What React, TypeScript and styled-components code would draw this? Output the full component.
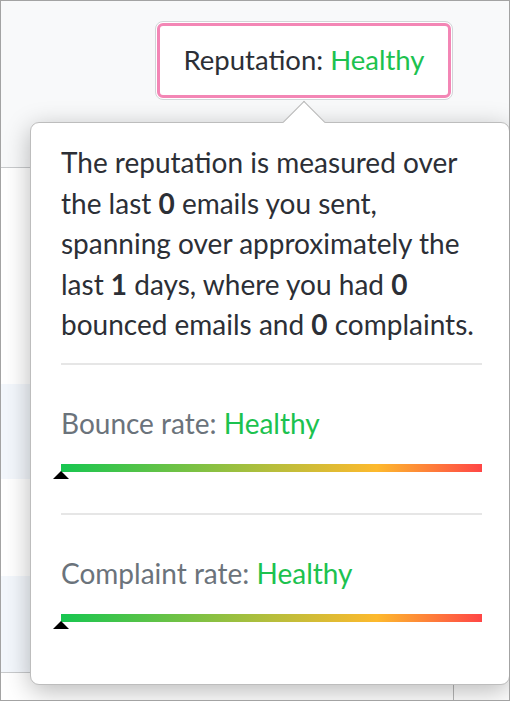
import styled, { createGlobalStyle } from 'styled-components';

const GlobalStyle = createGlobalStyle`
  html, body { margin: 0; padding: 0; background: #fff; }
  body { font-family: Lato, "Open Sans", Arial, sans-serif; }
  * { box-sizing: border-box; }
`;

const Frame = styled.div`
  position: relative;
  width: 510px;
  height: 701px;
  border: 1px solid #a3a3a3;
  overflow: hidden;
  display: flex;
  flex-direction: column;
  background: #fff;
`;

const Header = styled.div`
  height: 167px;
  flex: none;
  background: #f8f9fa;
  border-bottom: 1px solid #c8cacc;
  padding: 20px 0 0 154px;
`;

const Row = styled.div<{ $h: number; $striped?: boolean }>`
  flex: none;
  height: ${p => p.$h}px;
  background: ${p => (p.$striped ? '#f3f7fc' : '#fff')};
`;

const FooterRow = styled.div`
  flex: 1;
  border-top: 1px solid #c8cacc;
  display: grid;
  grid-template-columns: 452px 1fr;
`;

const FooterCell = styled.div`
  & + & { border-left: 1px solid #b8b8b8; }
`;

const Trigger = styled.button`
  width: 298px;
  height: 79px;
  border: 1px solid #d2d5d8;
  border-radius: 8px;
  background: #fff;
  padding: 1px;
  cursor: pointer;
`;

const TriggerInner = styled.div`
  height: 100%;
  border: 3px solid #f386b5;
  border-radius: 6px;
  display: flex;
  align-items: center;
  justify-content: center;
  font-family: Lato, "Open Sans", Arial, sans-serif;
  font-size: 27.5px;
  color: #2c2f36;
  padding-bottom: 2px;
`;

const Good = styled.span`
  color: #1cc24f;
`;

const Popover = styled.div`
  position: absolute;
  left: 29px;
  top: 121px;
  width: 480px;
  height: 563px;
  background: #fff;
  border: 1px solid #bdbdbd;
  border-radius: 9px;
  box-shadow: 0 6px 26px rgba(0, 0, 0, 0.28);
  padding: 19px 27px 0 30px;
`;

const Arrow = styled.div`
  position: absolute;
  top: -16px;
  left: 258px;
  width: 30px;
  height: 30px;
  background: #fff;
  border-top: 1px solid #b5b5b5;
  border-left: 1px solid #b5b5b5;
  transform: rotate(45deg);
`;

const Body = styled.p`
  margin: 0;
  font-size: 28px;
  line-height: 40.5px;
  color: #2c2f36;

  b { font-weight: 700; }
`;

const Divider = styled.hr<{ $top: number }>`
  margin: ${p => p.$top}px 0 0;
  border: none;
  height: 2px;
  background: #e6e6e6;
`;

const Metric = styled.div`
  padding-top: 38px;
`;

const MetricLabel = styled.div`
  font-size: 28px;
  line-height: 40px;
  color: #6b737b;
`;

const Track = styled.div`
  position: relative;
  margin-top: 21px;
  height: 8px;
  background: linear-gradient(to right, #17c650 0%, #b6be3c 50%, #fdb92d 75%, #ff4646 100%);
`;

const Marker = styled.div`
  position: absolute;
  top: 7px;
  width: 0;
  height: 0;
  margin-left: -8px;
  border-left: 8px solid transparent;
  border-right: 8px solid transparent;
  border-bottom: 8px solid #000;
`;

const RateMetric = ({ label, status, value }: { label: string; status: string; value: number }) => (
  <Metric>
    <MetricLabel>
      {label}: <Good>{status}</Good>
    </MetricLabel>
    <Track>
      <Marker style={{ left: `${value}%` }} />
    </Track>
  </Metric>
);

const App = () => {
  return (
    <>
      <GlobalStyle />
      <Frame>
        <Header>
          <Trigger type='button'>
            <TriggerInner>
              Reputation:&nbsp;<Good>Healthy</Good>
            </TriggerInner>
          </Trigger>
        </Header>
        <Row $h={216} />
        <Row $h={95} $striped />
        <Row $h={97} />
        <Row $h={96} $striped />
        <FooterRow>
          <FooterCell />
          <FooterCell />
        </FooterRow>

        <Popover>
          <Arrow />
          <Body>
            The reputation is measured over the last <b>0</b> emails you sent, spanning over
            approximately the last <b>1</b> days, where you had <b>0</b> bounced emails and{' '}
            <b>0</b> complaints.
          </Body>
          <Divider $top={18} />
          <RateMetric label='Bounce rate' status='Healthy' value={0} />
          <Divider $top={41} />
          <RateMetric label='Complaint rate' status='Healthy' value={0} />
        </Popover>
      </Frame>
    </>
  );
};

export default App;
